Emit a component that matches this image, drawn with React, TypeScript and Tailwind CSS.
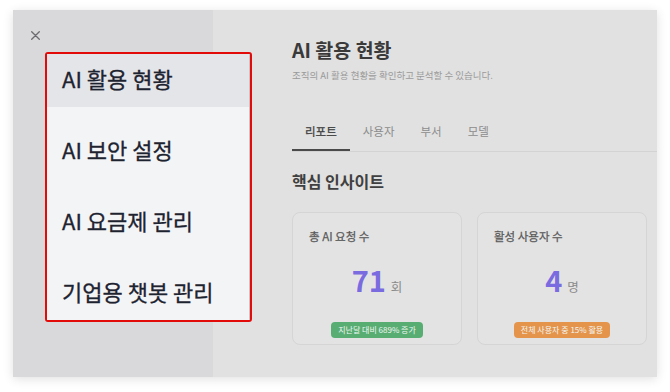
import { useState } from 'react'

type Stat = { title: string; value: string; unit: string; note: string; tone: 'green' | 'orange' }

const MENU = ['AI 활용 현황', 'AI 보안 설정', 'AI 요금제 관리', '기업용 챗봇 관리']
const TABS = ['리포트', '사용자', '부서', '모델']
const STATS: Stat[] = [
  { title: '총 AI 요청 수', value: '71', unit: '회', note: '지난달 대비 689% 증가', tone: 'green' },
  { title: '활성 사용자 수', value: '4', unit: '명', note: '전체 사용자 중 15% 활용', tone: 'orange' },
]

const font = { fontFamily: '"Noto Sans CJK KR", "Noto Sans", sans-serif' }

function StatCard({ s }: { s: Stat }) {
  return (
    <div className="flex h-[133px] w-[170px] flex-col items-center rounded-[8px] border border-[#d5d5d5] bg-[#e3e3e3] px-[16px] pt-[15px]">
      <div className="w-full text-[11.5px] leading-[16px] text-[#5a5a5a] [-webkit-text-stroke:0.25px_#5a5a5a]">{s.title}</div>
      <div className="mt-[18px] flex items-baseline gap-[5px] leading-[34px]">
        <span className="text-[29px] font-bold text-[#7b6be0]">{s.value}</span>
        <span className="text-[12.5px] text-[#8a8a8a]">{s.unit}</span>
      </div>
      <div
        className={`mt-[18px] flex h-[16px] items-center rounded-[4px] px-[7px] text-[8px] leading-none text-[#f1f7f2] ${
          s.tone === 'green' ? 'bg-[#57ad72]' : 'bg-[#e5944b]'
        }`}
      >
        {s.note}
      </div>
    </div>
  )
}

export default function App() {
  const [active, setActive] = useState(0)
  const [tab, setTab] = useState(0)

  return (
    <div className="h-[392px] w-[670px] bg-white pl-[13px] pt-[10px]" style={font}>
      <div className="relative flex h-[367px] w-[644px] shadow-[0_2px_10px_rgba(0,0,0,0.12)]">
        <aside className="w-[200px] bg-[#d9d9db] pl-[18px] pt-[21px]">
          <button className="block text-[#6b6b70]" aria-label="닫기">
            <svg width="9" height="9" viewBox="0 0 9 9" fill="none" stroke="currentColor" strokeWidth="1.3" strokeLinecap="round">
              <path d="M0.7 0.7L8.3 8.3M8.3 0.7L0.7 8.3" />
            </svg>
          </button>
        </aside>

        <main className="flex-1 bg-[#e1e1e1] pl-[79px] pt-[27px]">
          <h1 className="text-[19.5px] font-bold leading-[25px] text-[#3a3a3a]">AI 활용 현황</h1>
          <p className="mt-[7px] text-[9.5px] leading-[12px] text-[#9a9a9a]">조직의 AI 활용 현황을 확인하고 분석할 수 있습니다.</p>

          <div className="mt-[43px] flex border-b border-[#d3d3d3]">
            {TABS.map((t, i) => (
              <button
                key={t}
                onClick={() => setTab(i)}
                className={`border-b-2 px-[13px] pb-[11px] text-[11.5px] leading-[14px] ${
                  tab === i
                    ? 'border-[#4a4a4a] text-[#3d3d3d] [-webkit-text-stroke:0.25px_#3d3d3d]'
                    : 'border-transparent text-[#8c8c8c]'
                }`}
              >
                {t}
              </button>
            ))}
          </div>

          <h2 className="mt-[19px] text-[16px] font-bold leading-[20px] text-[#404040]">핵심 인사이트</h2>

          <div className="mt-[21px] flex gap-[15px]">
            {STATS.map((s) => (
              <StatCard key={s.title} s={s} />
            ))}
          </div>
        </main>

        {/* 메뉴 팝업 */}
        <div className="absolute left-[32px] top-[42px] w-[207px] rounded-[3px] border-2 border-[#e30a0a]">
          <div className="flex h-[266px] flex-col gap-[18px] border-r border-[#c6c6ca] bg-[#f3f4f6]">
            {MENU.map((m, i) => (
              <button
                key={m}
                onClick={() => setActive(i)}
                className={`flex h-[53px] items-center pb-[4px] pl-[15px] text-left text-[22px] text-[#1e2330] [-webkit-text-stroke:0.3px_#1e2330] ${
                  active === i ? 'bg-[#e4e5e9]' : ''
                }`}
              >
                {m}
              </button>
            ))}
          </div>
        </div>
      </div>
    </div>
  )
}
